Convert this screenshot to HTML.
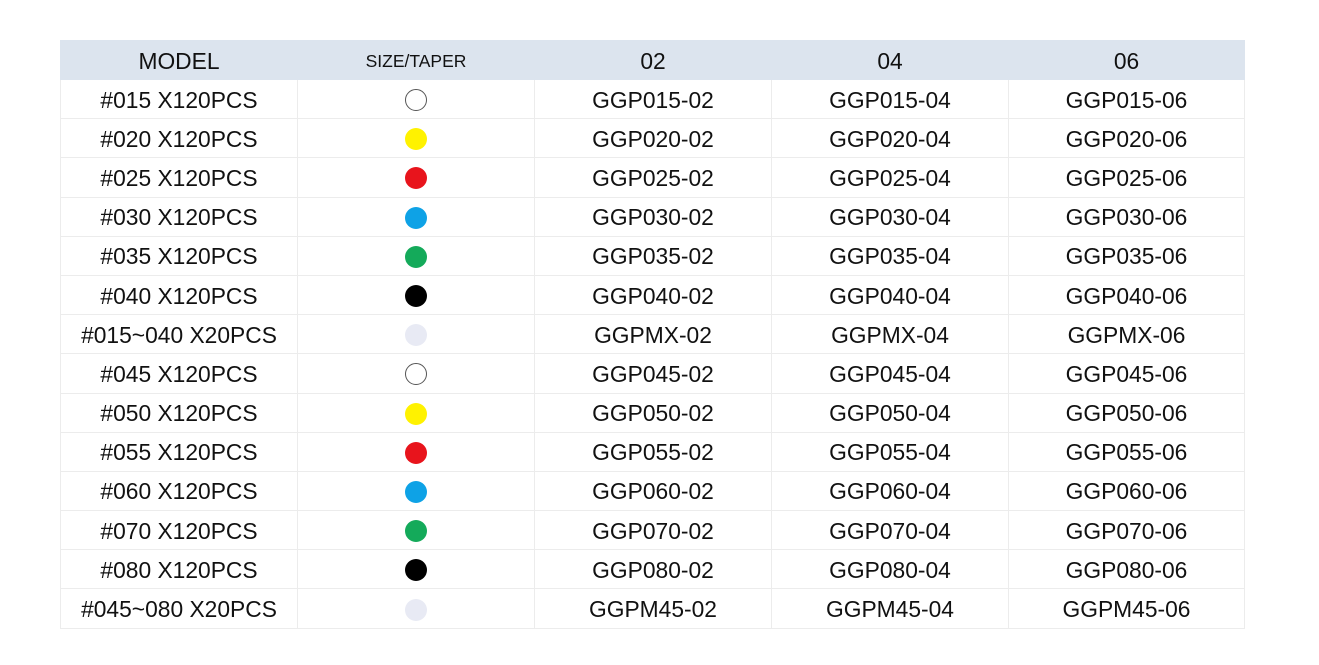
<!DOCTYPE html>
<html><head><meta charset="utf-8"><style>
body{margin:0;background:#fff;width:1319px;height:665px;overflow:hidden;font-family:"Liberation Sans",Arial,sans-serif;}
table{position:absolute;left:60px;top:40px;border-collapse:collapse;table-layout:fixed;width:1184px;}
tr{height:39.2px}
td{border:1px solid #ececec;text-align:center;padding:1px 0 0 0;font-size:22.8px;color:#111;line-height:20px;overflow:hidden;}
tr.h{height:39px}
tr.h td{background:#dce4ee;border-color:#dce4ee;padding-top:1px;}
tr.h td.s{font-size:17.5px;}
.c{display:inline-block;width:22px;height:22px;border-radius:50%;vertical-align:middle;position:relative;top:0px}
.w{border:1px solid #555;width:20px;height:20px;background:#fff}
.y{background:#fff200}.r{background:#e8141c}.b{background:#0ea2e6}.g{background:#14aa5a}.k{background:#000}.m{background:#e8eaf4}
</style></head><body>
<table>
<colgroup><col style="width:237px"><col style="width:237px"><col style="width:237px"><col style="width:237px"><col style="width:236px"></colgroup>
<tr class="h"><td>MODEL</td><td class="s">SIZE/TAPER</td><td>02</td><td>04</td><td>06</td></tr>
<tr><td>#015 X120PCS</td><td><span class="c w"></span></td><td>GGP015-02</td><td>GGP015-04</td><td>GGP015-06</td></tr>
<tr><td>#020 X120PCS</td><td><span class="c y"></span></td><td>GGP020-02</td><td>GGP020-04</td><td>GGP020-06</td></tr>
<tr><td>#025 X120PCS</td><td><span class="c r"></span></td><td>GGP025-02</td><td>GGP025-04</td><td>GGP025-06</td></tr>
<tr><td>#030 X120PCS</td><td><span class="c b"></span></td><td>GGP030-02</td><td>GGP030-04</td><td>GGP030-06</td></tr>
<tr><td>#035 X120PCS</td><td><span class="c g"></span></td><td>GGP035-02</td><td>GGP035-04</td><td>GGP035-06</td></tr>
<tr><td>#040 X120PCS</td><td><span class="c k"></span></td><td>GGP040-02</td><td>GGP040-04</td><td>GGP040-06</td></tr>
<tr><td>#015~040 X20PCS</td><td><span class="c m"></span></td><td>GGPMX-02</td><td>GGPMX-04</td><td>GGPMX-06</td></tr>
<tr><td>#045 X120PCS</td><td><span class="c w"></span></td><td>GGP045-02</td><td>GGP045-04</td><td>GGP045-06</td></tr>
<tr><td>#050 X120PCS</td><td><span class="c y"></span></td><td>GGP050-02</td><td>GGP050-04</td><td>GGP050-06</td></tr>
<tr><td>#055 X120PCS</td><td><span class="c r"></span></td><td>GGP055-02</td><td>GGP055-04</td><td>GGP055-06</td></tr>
<tr><td>#060 X120PCS</td><td><span class="c b"></span></td><td>GGP060-02</td><td>GGP060-04</td><td>GGP060-06</td></tr>
<tr><td>#070 X120PCS</td><td><span class="c g"></span></td><td>GGP070-02</td><td>GGP070-04</td><td>GGP070-06</td></tr>
<tr><td>#080 X120PCS</td><td><span class="c k"></span></td><td>GGP080-02</td><td>GGP080-04</td><td>GGP080-06</td></tr>
<tr><td>#045~080 X20PCS</td><td><span class="c m"></span></td><td>GGPM45-02</td><td>GGPM45-04</td><td>GGPM45-06</td></tr>
</table>
</body></html>
